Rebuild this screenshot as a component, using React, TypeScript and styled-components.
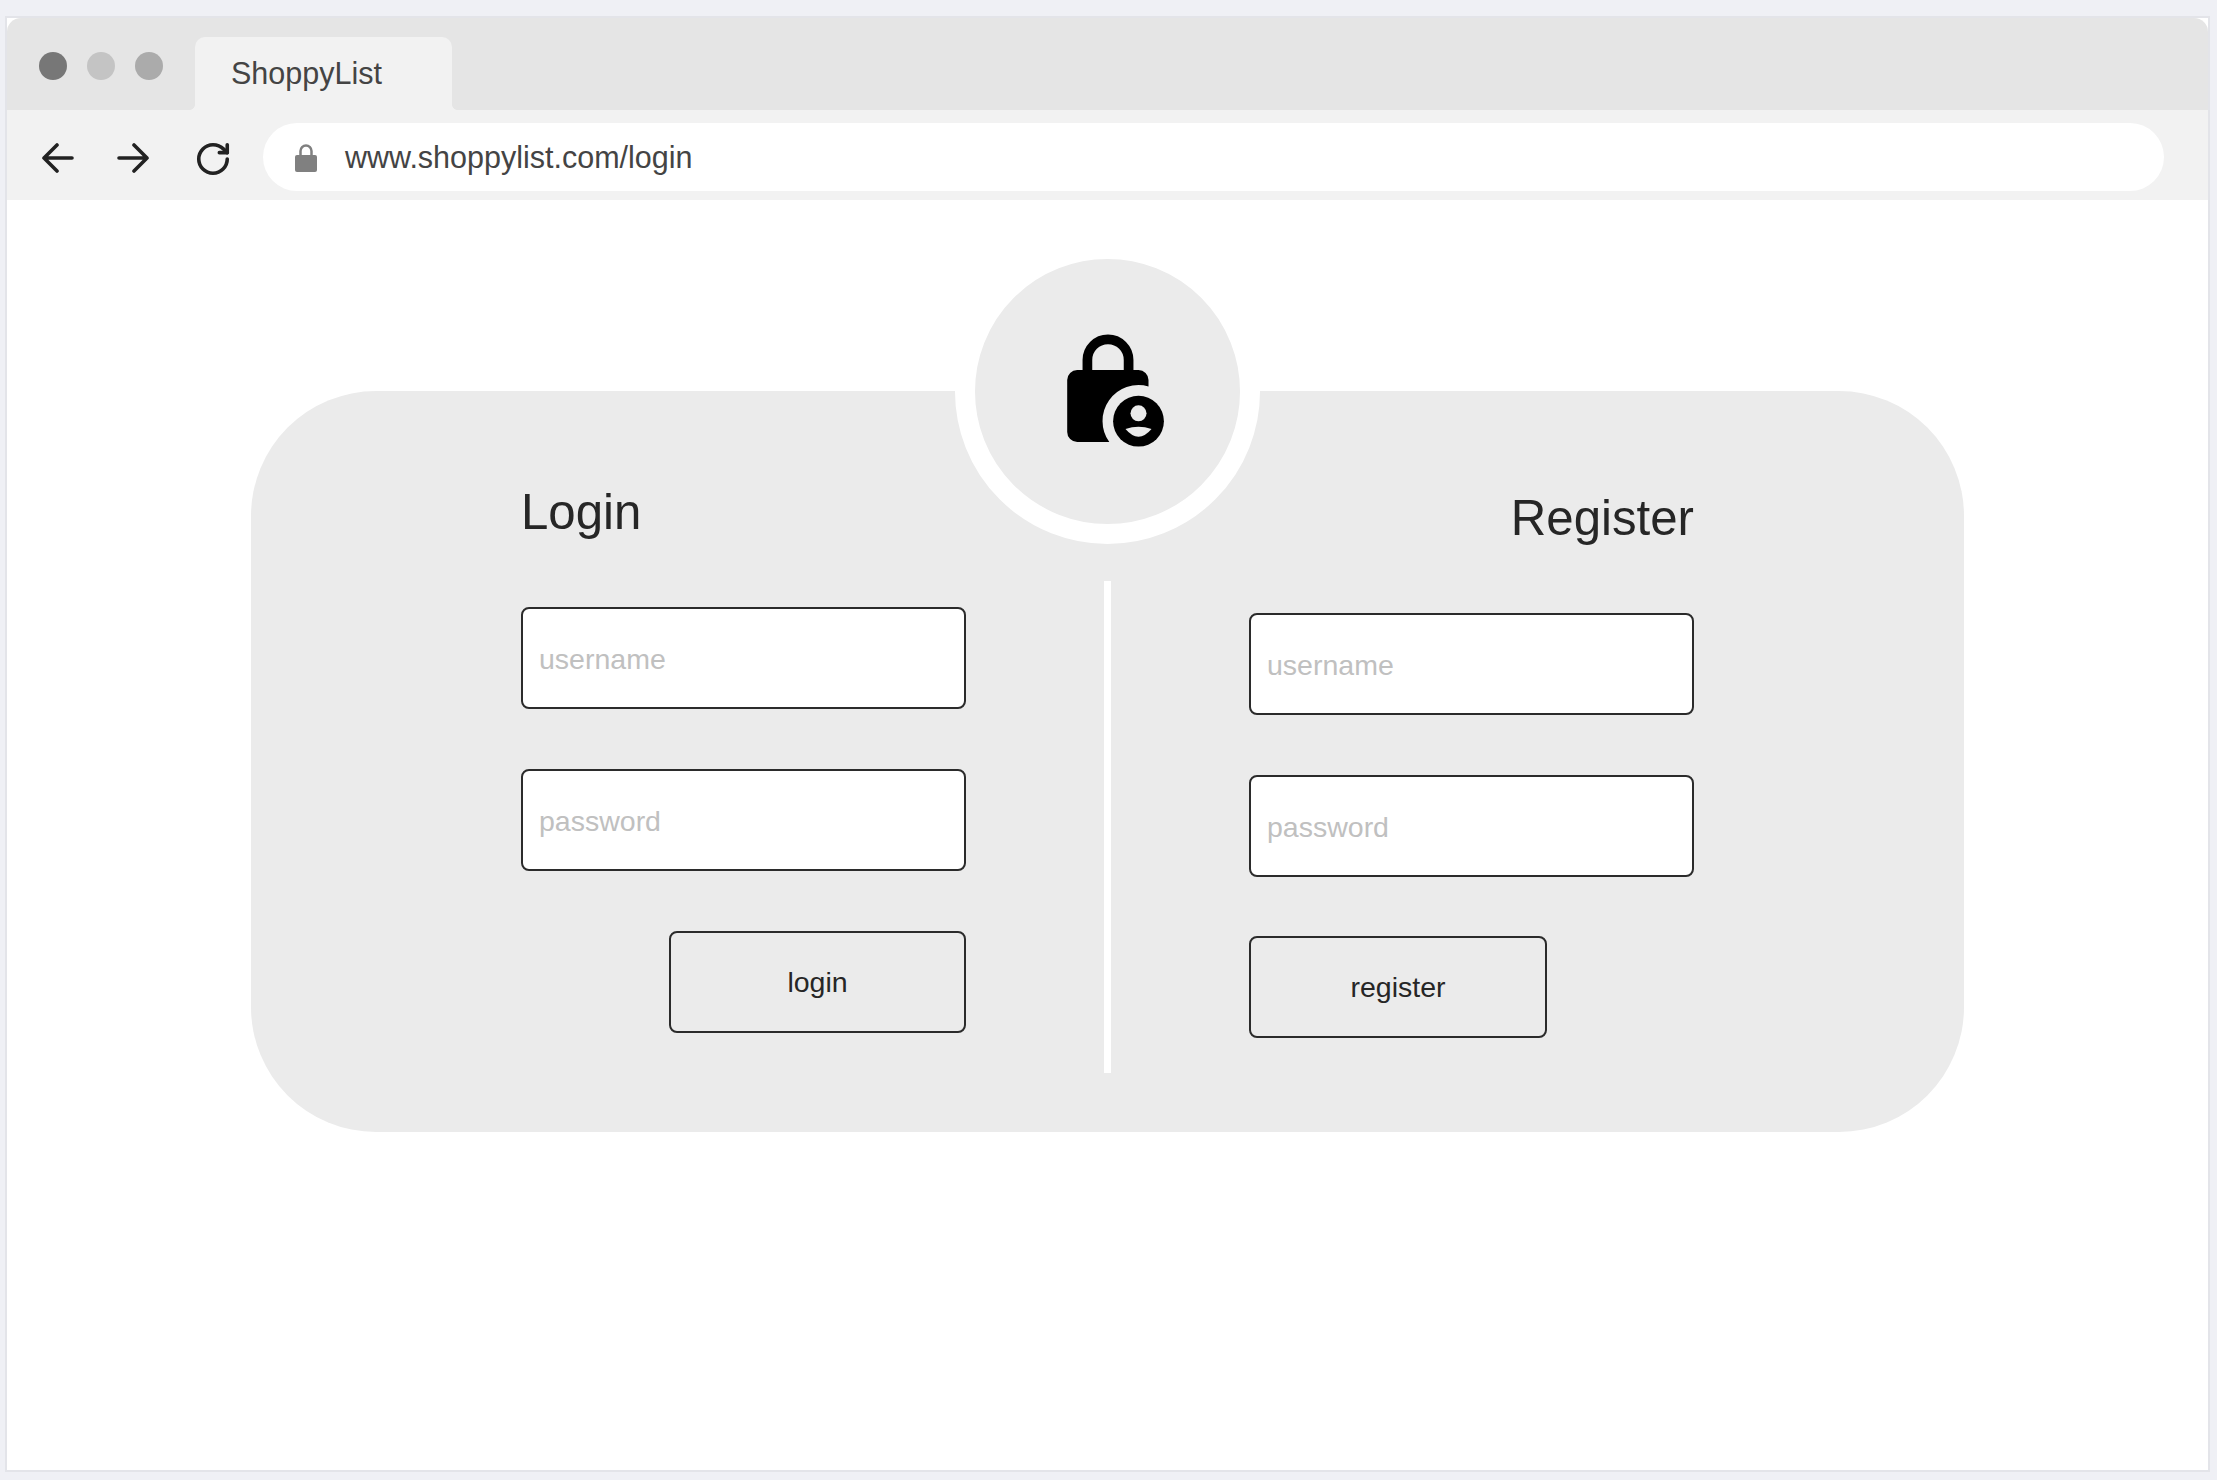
import React from 'react';
import styled, { createGlobalStyle } from 'styled-components';
import { RotateCw } from 'lucide-react';

const GlobalStyle = createGlobalStyle`
  html, body {
    margin: 0;
    padding: 0;
    background: #eff0f5;
    font-family: "Liberation Sans", Arial, sans-serif;
  }
`;

const Page = styled.div`
  width: 2217px;
  height: 1480px;
  padding: 16px 0 0 5px;
  box-sizing: border-box;
`;

const BrowserWindow = styled.div`
  width: 2205px;
  height: 1456px;
  box-sizing: border-box;
  border: 2px solid #e3e4e9;
  background: #fff;
  display: flex;
  flex-direction: column;
`;

const TabStrip = styled.div`
  height: 92px;
  flex: none;
  display: flex;
  background: #e5e5e5;
  border-radius: 14px 14px 0 0;
`;

const Dots = styled.div`
  width: 188px;
  padding: 34px 0 0 32px;
  box-sizing: border-box;
  display: flex;
  gap: 20px;
`;

const Dot = styled.span<{ $color: string }>`
  width: 28px;
  height: 28px;
  border-radius: 50%;
  background: ${(p) => p.$color};
`;

const Tab = styled.div`
  position: relative;
  width: 257px;
  height: 73px;
  margin-top: 19px;
  padding-left: 36px;
  box-sizing: border-box;
  background: #f2f2f2;
  border-radius: 10px 10px 0 0;
  color: #444;
  font-size: 30.5px;
  line-height: 73px;

  &::before,
  &::after {
    content: '';
    position: absolute;
    bottom: 0;
    width: 5px;
    height: 5px;
  }
  &::before {
    left: -5px;
    background: radial-gradient(circle at 0 0, #e5e5e5 4.5px, #f2f2f2 5px);
  }
  &::after {
    right: -5px;
    background: radial-gradient(circle at 100% 0, #e5e5e5 4.5px, #f2f2f2 5px);
  }
`;

const Toolbar = styled.div`
  height: 90px;
  flex: none;
  display: flex;
  align-items: center;
  padding: 13px 44px 9px 35px;
  box-sizing: border-box;
  background: #f2f2f2;
  color: #222;
`;

const NavIcon = styled.svg`
  width: 32px;
  height: 32px;
  flex: none;
  margin: 2px 43px 0 0;
  fill: none;
  stroke: #222;
  stroke-width: 3.6;
  stroke-linecap: round;
  stroke-linejoin: round;
`;

const Reload = styled(RotateCw)`
  flex: none;
  margin: 3px 31px 0 2px;
`;

const AddressBar = styled.div`
  flex: 1;
  height: 68px;
  display: flex;
  align-items: center;
  padding: 1px 0 0 32px;
  box-sizing: border-box;
  background: #fff;
  border-radius: 34px;
  color: #444;
  font-size: 30.5px;
`;

const PadLock = styled.svg`
  width: 22px;
  height: 28px;
  flex: none;
  margin-right: 28px;
`;

const Content = styled.main`
  padding-top: 191px;
`;

const Card = styled.section`
  position: relative;
  width: 1713px;
  height: 741px;
  margin: 0 auto;
  padding: 93px 0 0 270px;
  box-sizing: border-box;
  display: flex;
  align-items: flex-start;
  background: #ebebeb;
  border-radius: 125px;
`;

const Badge = styled.div`
  position: absolute;
  top: -152.5px;
  left: calc(50% - 152.5px);
  width: 305px;
  height: 305px;
  box-sizing: border-box;
  display: flex;
  align-items: center;
  justify-content: center;
  border: 20px solid #fff;
  border-radius: 50%;
  background: #ebebeb;
`;

const Column = styled.form<{ $shift?: number; $alignEnd?: boolean }>`
  width: 445px;
  flex: none;
  display: flex;
  flex-direction: column;
  align-items: ${(p) => (p.$alignEnd ? 'flex-end' : 'flex-start')};
  margin-top: ${(p) => p.$shift || 0}px;
`;

const Title = styled.h2`
  margin: 0 0 67px;
  font-size: 49.2px;
  line-height: 56px;
  font-weight: 400;
  color: #262626;
`;

const Field = styled.input`
  width: 100%;
  height: 102px;
  margin-bottom: 60px;
  padding: 2px 16px 0;
  box-sizing: border-box;
  border: 2px solid #2b2b2b;
  border-radius: 8px;
  background: #fff;
  font-family: inherit;
  font-size: 28.5px;
  outline: none;

  &::placeholder {
    color: #c0c0c0;
    opacity: 1;
  }
`;

const LoginSubmit = styled.button`
  width: 297px;
  height: 102px;
  align-self: flex-end;
  border: 2px solid #2b2b2b;
  border-radius: 8px;
  background: transparent;
  color: #262626;
  font-family: inherit;
  font-size: 28.5px;
`;

const RegisterSubmit = styled(LoginSubmit)`
  width: 298px;
  margin-top: -1px;
  align-self: flex-start;
`;

const Divider = styled.div`
  width: 7px;
  height: 492px;
  flex: none;
  margin: 97px 138px 0;
  background: #fff;
`;

const LockPerson = () => (
  <svg width="120" height="120" viewBox="-12.5 1 120 120" aria-hidden="true">
    <path
      d="M16.7 40H78a10 10 0 0 1 10 10v6.4A36 36 0 0 0 48.8 112H16.7a10 10 0 0 1-10-10V50a10 10 0 0 1 10-10Z"
      fill="#000"
    />
    <path d="M26.9 42V29.9a20.6 20.6 0 0 1 41.2 0V42" fill="none" stroke="#000" strokeWidth="9.7" />
    <circle cx="78" cy="91.2" r="25.4" fill="#000" />
    <circle cx="78" cy="83.3" r="8" fill="#ebebeb" />
    <path d="M65 99Q78 94.4 91 99Q78 114.4 65 99Z" fill="#ebebeb" />
  </svg>
);

const App = () => (
  <Page>
    <GlobalStyle />
    <BrowserWindow>
      <TabStrip>
        <Dots>
          <Dot $color="#777" />
          <Dot $color="#c4c4c4" />
          <Dot $color="#ababab" />
        </Dots>
        <Tab>ShoppyList</Tab>
      </TabStrip>
      <Toolbar>
        <NavIcon viewBox="0 0 32 32">
          <path d="M30 16H2M15 3 2 16l13 13" />
        </NavIcon>
        <NavIcon viewBox="0 0 32 32">
          <path d="M2 16h28M17 3l13 13-13 13" />
        </NavIcon>
        <Reload size={38} strokeWidth={2.27} />
        <AddressBar>
          <PadLock viewBox="0 0 22 28">
            <rect y="11" width="22" height="17" rx="2" fill="#808080" />
            <path d="M5.5 12V7a5.5 5.5 0 0 1 11 0v5" fill="none" stroke="#808080" strokeWidth="2.5" />
          </PadLock>
          www.shoppylist.com/login
        </AddressBar>
      </Toolbar>
      <Content>
        <Card>
          <Badge>
            <LockPerson />
          </Badge>
          <Column>
            <Title>Login</Title>
            <Field placeholder="username" />
            <Field placeholder="password" />
            <LoginSubmit type="button">login</LoginSubmit>
          </Column>
          <Divider />
          <Column $shift={6} $alignEnd>
            <Title>Register</Title>
            <Field placeholder="username" />
            <Field placeholder="password" />
            <RegisterSubmit type="button">register</RegisterSubmit>
          </Column>
        </Card>
      </Content>
    </BrowserWindow>
  </Page>
);

export default App;
